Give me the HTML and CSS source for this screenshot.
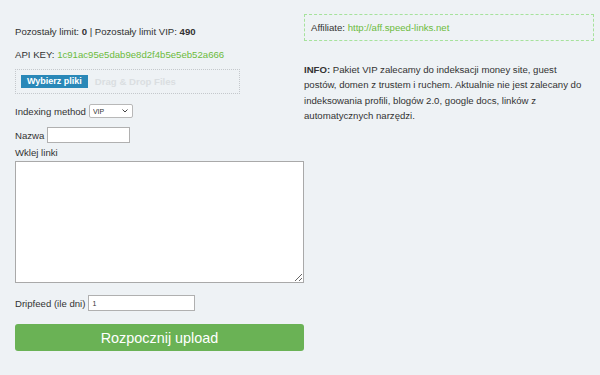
FILE: index.html
```html
<!DOCTYPE html>
<html lang="pl">
<head>
  <meta charset="UTF-8" />
  <title>Indexer – upload</title>
  <link rel="stylesheet" href="styles.css">
</head>
<body>
  <div class="page">
    <div class="col-left">
      <p class="stats">Pozostały limit: <b>0</b> | Pozostały limit VIP: <b>490</b></p>
      <p class="apikey">API KEY: <span class="green">1c91ac95e5dab9e8d2f4b5e5eb52a666</span></p>

      <div class="dropzone">
        <button class="pick-btn">Wybierz pliki</button>
        <span class="dd-text">Drag &amp; Drop Files</span>
      </div>

      <div class="row row-method">
        <label>Indexing method</label>
        <div class="select-wrap">
          <select class="method-select"><option>VIP</option></select>
          <svg class="chev" width="6" height="4" viewBox="0 0 6 4"><path d="M0.5 0.5 L3 3 L5.5 0.5" fill="none" stroke="#444" stroke-width="1"/></svg>
        </div>
      </div>

      <div class="row row-name">
        <label>Nazwa</label>
        <input type="text" class="name-input" />
      </div>

      <label class="links-label">Wklej linki</label>
      <textarea class="links"></textarea>

      <div class="row row-drip">
        <label>Dripfeed (ile dni)</label>
        <input type="text" class="drip-input" value="1" />
      </div>

      <button class="start-btn">Rozpocznij upload</button>
    </div>

    <div class="col-right">
      <div class="affiliate">Affiliate: <span class="green">http://aff.speed-links.net</span></div>
      <p class="info"><b>INFO:</b> <span>Pakiet VIP zalecamy do indeksacji money site, guest postów, domen z trustem i ruchem. Aktualnie nie jest zalecany do indeksowania profili, blogów 2.0, google docs, linków z automatycznych narzędzi.</span></p>
    </div>
  </div>
</body>
</html>
```

FILE: styles.css
```css
*{box-sizing:border-box;margin:0;padding:0;}
body{background:#eef2f5;color:#333;font-family:"Liberation Sans",Arial,Helvetica,sans-serif;font-size:9.6px;}
.green{color:#6cbb3c;}

.page{display:grid;grid-template-columns:289px 290px;padding:0 0 0 15px;}

.col-left{display:flex;flex-direction:column;align-items:flex-start;}
.stats{margin-top:25px;line-height:13px;}
.apikey{margin-top:10px;line-height:13px;}

.dropzone{margin-top:8px;width:225px;height:25px;border:1px dotted #c4c8cc;display:flex;align-items:center;padding-left:5px;gap:7px;}
.pick-btn{background:#2a88b8;color:#fff;border:none;font:bold 9px "Liberation Sans",Arial,sans-serif;padding:0 6px;height:13px;line-height:13px;white-space:nowrap;}
.dd-text{color:#dadee1;font-weight:bold;font-size:9.6px;white-space:nowrap;}

.row{display:flex;align-items:center;gap:3px;}
.row-method{margin-top:10px;}
.select-wrap{position:relative;display:flex;}
.method-select{appearance:none;-webkit-appearance:none;width:44px;height:14px;font:7px "Liberation Sans",Arial,sans-serif;border:1px solid #b8b8b8;border-radius:2px;background:#fff;color:#333;padding-left:3px;}
.chev{position:absolute;right:5px;top:5px;pointer-events:none;}
.row-name{margin-top:9px;}
.name-input{width:83px;height:16px;border:1px solid #b0b0b0;background:#fff;}
.links-label{margin-top:3px;line-height:13px;}
.links{margin-top:2px;width:289px;height:122px;border:1px solid #a9a9a9;background:#fff;resize:both;}
.row-drip{margin-top:12px;}
.drip-input{width:107px;height:16px;border:1px solid #b0b0b0;background:#fff;font:7px "Liberation Sans",Arial,sans-serif;padding-left:3px;color:#333;}

.start-btn{margin-top:13px;width:289px;height:27px;background:#6ab255;color:#fff;border:none;border-radius:3px;font:14.4px "Liberation Sans",Arial,sans-serif;}

.col-right{display:flex;flex-direction:column;}
.affiliate{margin-top:14px;height:27px;border:1px dashed #a6e29c;padding-left:6px;line-height:25px;}
.info{margin-top:21px;line-height:15.3px;padding-right:4px;}
```
